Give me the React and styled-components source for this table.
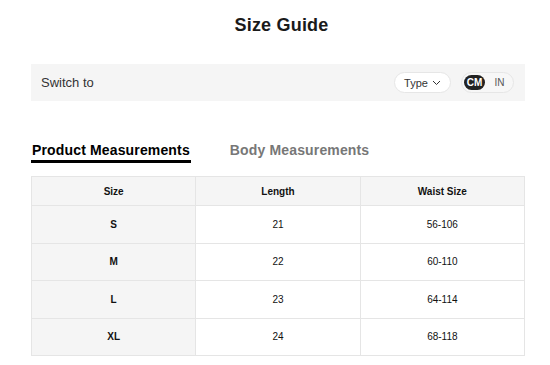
import styled, { createGlobalStyle } from "styled-components";

const GlobalStyle = createGlobalStyle`
  body {
    margin: 0;
    background: #fff;
    font-family: "Liberation Sans", Arial, sans-serif;
    color: #222;
  }
`;

export default function App() {
  const rows = [
    { size: "S", length: "21", waist: "56-106" },
    { size: "M", length: "22", waist: "60-110" },
    { size: "L", length: "23", waist: "64-114" },
    { size: "XL", length: "24", waist: "68-118" },
  ];

  return (
    <Page>
      <GlobalStyle />
      <Title>Size Guide</Title>
      <SwitchBar>
        <SwitchLabel>Switch to</SwitchLabel>
        <Controls>
          <TypeButton>
            Type
            <svg width="9" height="6" viewBox="0 0 9 6" fill="none">
              <path d="M1 1l3.5 3.5L8 1" stroke="#333" strokeWidth="1" />
            </svg>
          </TypeButton>
          <UnitToggle>
            <Unit active>CM</Unit>
            <Unit>IN</Unit>
          </UnitToggle>
        </Controls>
      </SwitchBar>
      <Tabs>
        <Tab active>Product Measurements</Tab>
        <Tab>Body Measurements</Tab>
      </Tabs>
      <Table>
        <thead>
          <tr>
            <Th>Size</Th>
            <Th>Length</Th>
            <Th>Waist Size</Th>
          </tr>
        </thead>
        <tbody>
          {rows.map((r) => (
            <tr key={r.size}>
              <Td first>{r.size}</Td>
              <Td>{r.length}</Td>
              <Td>{r.waist}</Td>
            </tr>
          ))}
        </tbody>
      </Table>
    </Page>
  );
}

const Page = styled.div`
  padding: 14px 25px 0 31px;
`;

const Title = styled.h1`
  margin: 0;
  padding-left: 7px;
  text-align: center;
  font-size: 18px;
  line-height: 22px;
  font-weight: 700;
  color: #1a1a1a;
  letter-spacing: 0.2px;
`;

const SwitchBar = styled.div`
  margin-top: 28px;
  height: 37px;
  background: #f5f5f5;
  display: flex;
  align-items: center;
  justify-content: space-between;
  padding: 0 11px 0 10px;
`;

const SwitchLabel = styled.span`
  font-size: 13px;
  color: #333;
`;

const Controls = styled.div`
  display: flex;
  align-items: center;
  gap: 10px;
`;

const TypeButton = styled.div`
  box-sizing: border-box;
  width: 57px;
  height: 21px;
  border: 1px solid #e6e6e6;
  border-radius: 11px;
  background: #fff;
  display: flex;
  align-items: center;
  justify-content: center;
  gap: 4px;
  font-size: 11px;
  color: #333;
`;

const UnitToggle = styled.div`
  box-sizing: border-box;
  width: 53px;
  height: 21px;
  border: 1px solid #e6e6e6;
  border-radius: 11px;
  background: #f7f7f7;
  display: flex;
  align-items: center;
  padding: 0 2px;
`;

const Unit = styled.span`
  width: 21px;
  height: 15px;
  border-radius: 8px;
  display: flex;
  align-items: center;
  justify-content: center;
  font-size: 10px;
  font-weight: ${(p) => (p.active ? 700 : 400)};
  color: ${(p) => (p.active ? "#fff" : "#555")};
  background: ${(p) => (p.active ? "#222" : "transparent")};
  margin-right: ${(p) => (p.active ? "4px" : "0")};
`;

const Tabs = styled.div`
  margin-top: 41px;
  display: flex;
  gap: 38px;
`;

const Tab = styled.div`
  font-size: 14px;
  line-height: 16px;
  font-weight: 700;
  letter-spacing: 0.15px;
  padding: 0 1px 2px;
  color: ${(p) => (p.active ? "#000" : "#777")};
  border-bottom: 3px solid ${(p) => (p.active ? "#000" : "transparent")};
`;

const Table = styled.table`
  margin-top: 13px;
  width: 100%;
  border-collapse: collapse;
  table-layout: fixed;
  font-size: 10px;
  color: #111;
`;

const Th = styled.th`
  height: 28px;
  padding: 0;
  background: #f5f5f5;
  border: 1px solid #e5e5e5;
  font-weight: 700;
  text-align: center;
`;

const Td = styled.td`
  height: 36.5px;
  padding: 0;
  border: 1px solid #e5e5e5;
  text-align: center;
  font-weight: ${(p) => (p.first ? 700 : 400)};
  background: ${(p) => (p.first ? "#f5f5f5" : "#fff")};
`;
